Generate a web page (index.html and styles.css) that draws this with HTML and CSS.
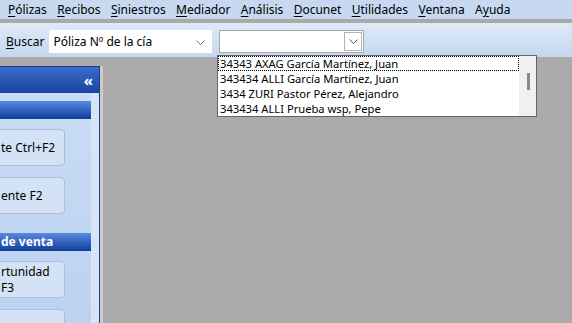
FILE: index.html
```html
<!DOCTYPE html>
<html lang="es">
<head>
  <meta charset="UTF-8">
  <title>Búsqueda de pólizas</title>
  <link rel="stylesheet" href="styles.css">
</head>
<body>
  <div class="menubar">
    <span class="menu-item"><u>P</u>ólizas</span>
    <span class="menu-item"><u>R</u>ecibos</span>
    <span class="menu-item"><u>S</u>iniestros</span>
    <span class="menu-item"><u>M</u>ediador</span>
    <span class="menu-item"><u>A</u>nálisis</span>
    <span class="menu-item"><u>D</u>ocunet</span>
    <span class="menu-item"><u>U</u>tilidades</span>
    <span class="menu-item"><u>V</u>entana</span>
    <span class="menu-item">A<u>y</u>uda</span>
  </div>
  <div class="separator"></div>
  <div class="toolbar">
    <span class="search-label"><u>B</u>uscar</span>
    <div class="combo combo-type">
      <span class="combo-text">Póliza Nº de la cía</span>
      <svg class="chevron" width="9" height="5" viewBox="0 0 9 5"><path d="M0.5 0.5 L4.5 4.5 L8.5 0.5" fill="none" stroke="#777" stroke-width="1"/></svg>
    </div>
    <div class="combo combo-value">
      <span class="combo-text"></span>
      <span class="combo-btn">
        <svg class="chevron" width="9" height="5" viewBox="0 0 9 5"><path d="M0.5 0.5 L4.5 4.5 L8.5 0.5" fill="none" stroke="#555" stroke-width="1"/></svg>
      </span>
    </div>
    <div class="dropdown">
      <ul class="dropdown-list">
        <li class="focused">34343 AXAG García Martínez, Juan</li>
        <li>343434 ALLI García Martínez, Juan</li>
        <li>3434 ZURI Pastor Pérez, Alejandro</li>
        <li>343434 ALLI Prueba wsp, Pepe</li>
      </ul>
      <div class="scrollbar"><div class="thumb"></div></div>
    </div>
  </div>

  <div class="workspace">
    <div class="sidepanel">
      <div class="panel-head"><span class="collapse">«</span></div>
      <div class="panel-body">
        <div class="section-bar"></div>
        <div class="action-btn">te Ctrl+F2</div>
        <div class="action-btn">ente F2</div>
        <div class="section-bar">de venta</div>
        <div class="action-btn tall">rtunidad<br>F3</div>
        <div class="action-btn"></div>
      </div>
    </div>
    <div class="panel-edge"></div>
    <div class="canvas"></div>
  </div>
</body>
</html>
```

FILE: styles.css
```css
* {
  box-sizing: border-box;
}
body {
  margin: 0;
  width: 572px;
  height: 323px;
  overflow: hidden;
  font-family: "Noto Sans", "DejaVu Sans", sans-serif;
  font-size: 12px;
  color: #000;
  background: #ababab;
}
u {
  text-decoration: underline;
  text-underline-offset: 2px;
}
.menubar {
  height: 19px;
  background: #c6d9f1;
  display: flex;
  align-items: center;
  padding-left: 8px;
  gap: 10.3px;
  line-height: 19px;
  font-size: 12px;
}
.separator {
  height: 4px;
  background: #a9a9a9;
}
.toolbar {
  position: relative;
  height: 34px;
  background: linear-gradient(#dfeaf8, #c3d7f0);
  display: flex;
  align-items: center;
  padding-left: 6px;
  padding-top: 2px;
}
.search-label {
  margin-right: 5px;
}
.combo {
  height: 23px;
  background: #fff;
  display: flex;
  align-items: center;
  position: relative;
}
.combo-type {
  width: 163px;
  padding-left: 4px;
}
.combo-type .chevron {
  position: absolute;
  right: 7px;
  top: 10px;
}
.combo-value {
  width: 145px;
  margin-left: 7px;
  border: 1px solid #a8a8a8;
}
.combo-btn {
  position: absolute;
  right: 1px;
  top: 1px;
  width: 18px;
  height: 19px;
  border: 1px solid #b4b4b4;
  display: flex;
  align-items: center;
  justify-content: center;
}
.dropdown {
  position: absolute;
  left: 217px;
  top: 32px;
  width: 320px;
  height: 62px;
  background: #fff;
  border: 1px solid #646464;
  display: flex;
  z-index: 2;
}
.dropdown-list {
  list-style: none;
  margin: 0;
  padding: 0;
  flex: 1;
  font-size: 11.2px;
}
.dropdown-list li {
  height: 15px;
  line-height: 15px;
  padding-left: 2px;
  white-space: nowrap;
}
.dropdown-list li.focused {
  outline: 1px dotted #000;
  outline-offset: -1px;
}
.scrollbar {
  width: 17px;
  background: #f0f0f0;
  position: relative;
}
.thumb {
  position: absolute;
  left: 8px;
  top: 17px;
  width: 3px;
  height: 17px;
  background: #8a8a8a;
}
.workspace {
  display: flex;
  height: 266px;
  padding-top: 9px;
}
.sidepanel {
  width: 100px;
  border: 1px solid #1c3d8e;
  border-left: none;
  border-bottom: none;
  background: #d6e4f7;
  overflow: hidden;
}
.panel-head {
  height: 26px;
  background: linear-gradient(#3a6bcc, #1b449f);
  display: flex;
  justify-content: flex-end;
  align-items: center;
  padding-right: 6px;
}
.collapse {
  color: #fff;
  font-size: 15px;
  font-weight: bold;
  line-height: 15px;
}
.panel-body {
  width: 91px;
  padding-top: 8px;
  padding-bottom: 10px;
  background: linear-gradient(#c9dcf5, #b9d0ef);
  display: flex;
  flex-direction: column;
  align-items: flex-start;
}
.section-bar {
  width: 91px;
  height: 18px;
  background: linear-gradient(#5a8be0, #0f3c9b);
  color: #fff;
  font-weight: bold;
  font-size: 12px;
  line-height: 18px;
  padding-left: 1px;
  margin-bottom: 10px;
  white-space: nowrap;
}
.action-btn {
  width: 75px;
  height: 37px;
  margin-left: -10px;
  margin-bottom: 11px;
  padding-left: 10px;
  border: 1px solid #a9bfdc;
  border-radius: 4px;
  background: #d4e2f5;
  display: flex;
  align-items: center;
  line-height: 16px;
  white-space: nowrap;
}
.action-btn + .section-bar {
  margin-top: 8px;
}
.panel-edge {
  width: 3px;
  background: #cbcbcb;
}
.canvas {
  flex: 1;
  background: #ababab;
}
```
